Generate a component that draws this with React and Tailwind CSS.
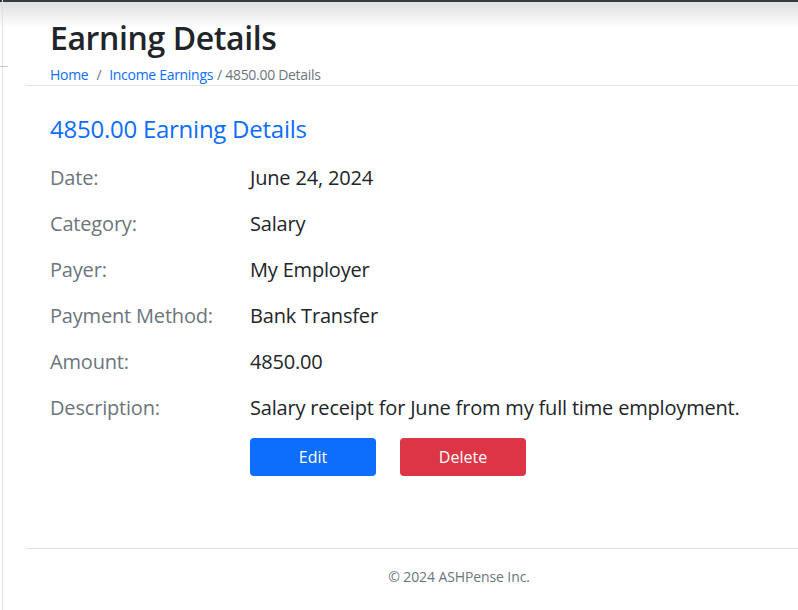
export default function App() {
  const rows = [
    ["Date:", "June 24, 2024"],
    ["Category:", "Salary"],
    ["Payer:", "My Employer"],
    ["Payment Method:", "Bank Transfer"],
    ["Amount:", "4850.00"],
    ["Description:", "Salary receipt for June from my full time employment."],
  ];

  return (
    <div className="relative flex min-h-[610px] overflow-hidden bg-white font-['Open_Sans',sans-serif] text-[#212529]">
      {/* navbar shadow */}
      <div className="absolute inset-x-0 top-0 h-[28px] bg-gradient-to-b from-[#dcdcdc] to-white/0 pointer-events-none">
        <div className="h-[2px] bg-[#343a40]" />
      </div>

      <div className="relative w-[3px] shrink-0 border-r border-[#dee2e6]">
        <div className="absolute left-0 top-[66px] h-px w-[8px] bg-[#c8c8c8]" />
      </div>

      <div className="flex flex-1 flex-col pl-[23px]">
        <div className="border-b border-[#dee2e6] pl-6 pt-[19px]">
          <h2 className="text-[32px] font-semibold leading-[38px] tracking-[-0.4px]">Earning Details</h2>
          <div className="mt-[7px] flex text-[14px] leading-[21px] tracking-[-0.3px]">
            <a className="text-[#0d6efd]">Home</a>
            <span className="px-2 text-[#6c757d]">/</span>
            <a className="text-[#0d6efd]">Income Earnings</a>
            <span className="pl-1 text-[#6c757d]">/ 4850.00 Details</span>
          </div>
        </div>

        <div className="pl-6 pt-[28px]">
          <h4 className="text-[24px] leading-[29px] tracking-[-0.25px] text-[#0d6efd]">4850.00 Earning Details</h4>
          <div className="mt-5">
            {rows.map(([label, value]) => (
              <div key={label} className="mb-4 flex text-[20px] leading-[30px] tracking-[-0.18px]">
                <div className="w-[200px] shrink-0 text-[#6c757d]">{label}</div>
                <div className="whitespace-nowrap">{value}</div>
              </div>
            ))}
          </div>
          <div className="ml-[200px] mt-[-1px] flex gap-6">
            <button className="h-[38px] w-[126px] rounded bg-[#0d6efd] text-[16px] text-white">Edit</button>
            <button className="h-[38px] w-[126px] rounded bg-[#dc3545] text-[16px] text-white">Delete</button>
          </div>
        </div>

        <div className="mt-[72px] border-t border-[#dee2e6] pl-[94px] pt-[17px] text-center text-[14px] leading-[21px] tracking-[-0.1px] text-[#6c757d]">
          © 2024 ASHPense Inc.
        </div>
      </div>
    </div>
  );
}
